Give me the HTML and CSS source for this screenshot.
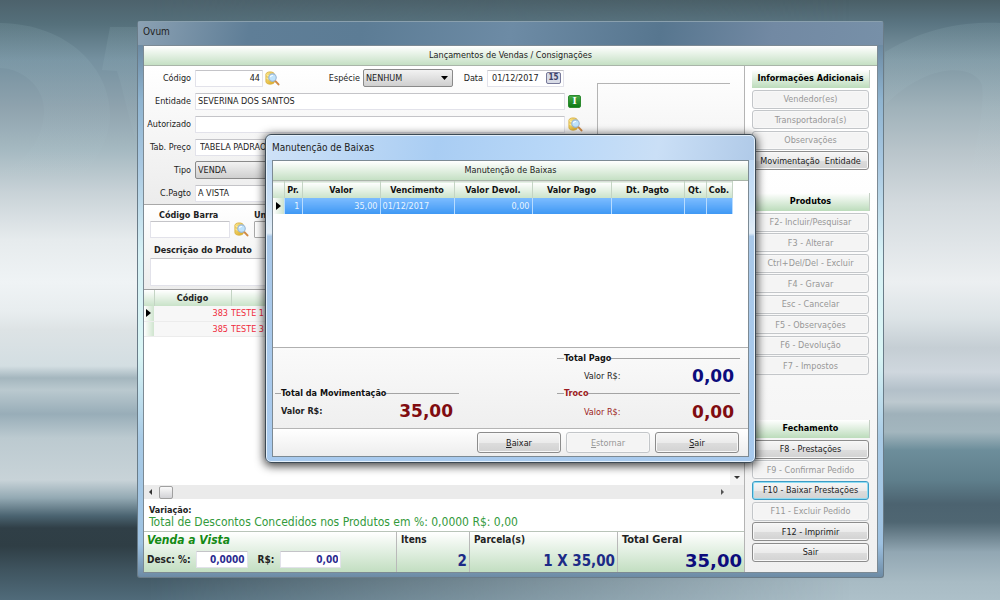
FILE: index.html
```html
<!DOCTYPE html>
<html lang="pt-BR">
<head>
<meta charset="utf-8">
<title>Ovum</title>
<link rel="stylesheet" href="styles.css">
</head>
<body>
<svg width="0" height="0" class="defs" aria-hidden="true">
  <defs>
    <linearGradient id="gold" x1="0" y1="0" x2="1" y2="1"><stop offset="0" stop-color="#fbe88a"/><stop offset="1" stop-color="#d9a51e"/></linearGradient>
    <symbol id="lookup" viewBox="0 0 16 16">
      <path d="M1 3.5C1 2 3 1 5.5 1S10 2 10 3.500V11.500C10 13 8 14 5.500 14S1 13 1 11.500Z" fill="url(#gold)" stroke="#d9b040"/>
      <path d="M1.500 7.500c1 1 3 1.200 4 1M1.500 4c1 1 3 1.200 5 .8" fill="none" stroke="#fff3b5"/>
      <path d="M10.800 10.500l3.600 3.800" stroke="#d08a45" stroke-width="2.200" stroke-linecap="round"/>
      <circle cx="8" cy="7" r="4" fill="#bfe3fb" stroke="#9db8d4" stroke-width="1.200"/>
      <path d="M5.800 6.500a2.400 2.400 0 0 1 2.600-1.700" fill="none" stroke="#fff" stroke-width="1.200"/>
    </symbol>
  </defs>
</svg>
<div class="desktop">
  <svg class="wallpaper" viewBox="0 0 1000 600" preserveAspectRatio="none" aria-hidden="true">
    <defs>
      <linearGradient id="fade" x1="0" y1="23" x2="0" y2="190" gradientUnits="userSpaceOnUse"><stop offset="0" stop-color="#bfe0e6" stop-opacity=".1"/><stop offset="1" stop-color="#bfe0e6" stop-opacity="0"/></linearGradient>
    </defs>
    <path d="M0 23C70 24 110 70 110 115C110 150 80 185 50 200H0V172C30 160 44 135 44 110C44 85 20 68 0 68Z" fill="url(#fade)"/>
    <path d="M110 27H140V150C128 120 125 95 117 71L102 70Z" fill="url(#fade)"/>
    <path d="M885 52C930 26 965 22 1000 23V200H965C975 150 985 110 982 85C975 65 930 60 885 105Z" fill="url(#fade)"/>
  </svg>
  <main class="window">
    <div class="titlebar">Ovum</div>
    <div class="client">
      <h1 class="band">Lançamentos de Vendas / Consignações</h1>
      <div class="columns">
        <div class="work">
          <form class="form">
            <div class="row">
              <label class="lbl" for="cod">Código</label>
              <input id="cod" class="field num w-code" value="44">
              <button type="button" class="icon" aria-label="Pesquisar código"><svg><use href="#lookup"/></svg></button>
              <label class="lbl wide" for="esp">Espécie</label>
              <select id="esp" class="combo w-esp"><option>NENHUM</option></select>
              <label class="lbl date" for="dat">Data</label>
              <span class="field datebox"><input id="dat" value="01/12/2017"><button type="button" class="cal" aria-label="Calendário">15</button></span>
            </div>
            <div class="row">
              <label class="lbl" for="ent">Entidade</label>
              <input id="ent" class="field w-long" value="SEVERINA DOS SANTOS">
              <button type="button" class="info" aria-label="Informações">I</button>
            </div>
            <div class="row">
              <label class="lbl" for="aut">Autorizado</label>
              <input id="aut" class="field w-long">
              <button type="button" class="icon" aria-label="Pesquisar autorizado"><svg><use href="#lookup"/></svg></button>
            </div>
            <div class="row">
              <label class="lbl" for="tab">Tab. Preço</label>
              <input id="tab" class="field w-long pad" value="TABELA PADRAO">
            </div>
            <div class="row">
              <label class="lbl" for="tip">Tipo</label>
              <select id="tip" class="combo w-long"><option>VENDA</option></select>
            </div>
            <div class="row">
              <label class="lbl" for="pag">C.Pagto</label>
              <input id="pag" class="field w-long" value="A VISTA">
            </div>
            <div class="photo"></div>
          </form>
          <section class="product">
            <div class="cell">
              <label for="bar">Código Barra</label>
              <div class="inline"><input id="bar" class="field w-bar"><button type="button" class="icon" aria-label="Pesquisar barra"><svg><use href="#lookup"/></svg></button></div>
            </div>
            <div class="cell unit">
              <label for="uni">Unidade</label>
              <input id="uni" class="field framed">
            </div>
            <div class="cell full">
              <label for="desc">Descrição do Produto</label>
              <input id="desc" class="field tall">
            </div>
          </section>
          <div class="items">
            <table class="grid">
              <colgroup><col class="c-mark"><col class="c-code"><col></colgroup>
              <thead><tr><th></th><th>Código</th><th></th></tr></thead>
              <tbody>
                <tr><td class="mark"><i class="arrow"></i></td><td class="r">383</td><td>TESTE 1</td></tr>
                <tr><td class="mark"></td><td class="r">385</td><td>TESTE 3</td></tr>
              </tbody>
            </table>
            <div class="vbar"><i class="down"></i></div>
          </div>
          <div class="hbar"><i class="left"></i><i class="thumb"></i><i class="right"></i></div>
          <div class="variation">
            <b>Variação:</b>
            <span>Total de Descontos Concedidos nos Produtos em %: 0,0000 R$: 0,00</span>
          </div>
          <footer class="totals">
            <div class="total sale">
              <em>Venda a Vista</em>
              <div class="inline">
                <label for="dp">Desc: %:</label><input id="dp" class="field blue w-dp" value="0,0000">
                <label for="dr" class="rs">R$:</label><input id="dr" class="field blue w-dr" value="0,00">
              </div>
            </div>
            <div class="total"><b>Itens</b><span>2</span></div>
            <div class="total"><b>Parcela(s)</b><span>1 X 35,00</span></div>
            <div class="total grand"><b>Total Geral</b><span class="big">35,00</span></div>
          </footer>
        </div>
        <aside class="side">
          <div class="group g1">
            <h2>Informações Adicionais</h2>
            <button disabled>Vendedor(es)</button>
            <button disabled>Transportadora(s)</button>
            <button disabled>Observações</button>
            <button>Movimentação&nbsp; Entidade</button>
          </div>
          <div class="group g2">
            <h2>Produtos</h2>
            <button disabled>F2- Incluir/Pesquisar</button>
            <button disabled>F3 - Alterar</button>
            <button disabled>Ctrl+Del/Del - Excluir</button>
            <button disabled>F4 - Gravar</button>
            <button disabled>Esc - Cancelar</button>
            <button disabled>F5 - Observações</button>
            <button disabled>F6 - Devolução</button>
            <button disabled>F7 - Impostos</button>
          </div>
          <div class="group g3">
            <h2>Fechamento</h2>
            <button>F8 - Prestações</button>
            <button disabled>F9 - Confirmar Pedido</button>
            <button class="focus">F10 - Baixar Prestações</button>
            <button disabled>F11 - Excluir Pedido</button>
            <button>F12 - Imprimir</button>
            <button>Sair</button>
          </div>
        </aside>
      </div>
    </div>
  </main>
  <section class="dialog" role="dialog" aria-labelledby="dlg">
    <div class="titlebar" id="dlg">Manutenção de Baixas</div>
    <div class="client">
      <h2 class="band">Manutenção de Baixas</h2>
      <div class="sheet">
        <table class="pay">
          <colgroup><col class="p0"><col class="p1"><col class="p2"><col class="p3"><col class="p4"><col class="p5"><col class="p6"><col class="p7"><col class="p8"></colgroup>
          <thead><tr><th></th><th>Pr.</th><th>Valor</th><th>Vencimento</th><th>Valor Devol.</th><th>Valor Pago</th><th>Dt. Pagto</th><th>Qt.</th><th>Cob.</th></tr></thead>
          <tbody><tr><td class="mark"><i class="arrow"></i></td><td class="r">1</td><td class="r">35,00</td><td>01/12/2017</td><td class="r">0,00</td><td></td><td></td><td></td><td></td></tr></tbody>
        </table>
      </div>
      <div class="sums">
        <fieldset class="f-mov"><legend>Total da Movimentação</legend><b>Valor R$:</b><strong>35,00</strong></fieldset>
        <div class="stack">
          <fieldset><legend>Total Pago</legend><span>Valor R$:</span><strong class="navy">0,00</strong></fieldset>
          <fieldset class="red"><legend>Troco</legend><span>Valor R$:</span><strong>0,00</strong></fieldset>
        </div>
      </div>
      <div class="actions">
        <button><u>B</u>aixar</button>
        <button disabled><u>E</u>stornar</button>
        <button><u>S</u>air</button>
      </div>
    </div>
  </section>
</div>
</body>
</html>
```
FILE: styles.css
```css
* { box-sizing: border-box; }
body { margin: 0; font: 9px/12px "DejaVu Sans Condensed", "DejaVu Sans", sans-serif; color: #222; }
input, select, button { font: inherit; color: inherit; margin: 0; padding: 0; border: 0; min-width: 0; }
h1, h2 { margin: 0; font: inherit; }
.defs { position: absolute; }

.desktop {
  position: relative; min-height: 100vh; padding: 21px 116px 22px 137px; overflow: hidden; isolation: isolate;
  background: linear-gradient(#4a5f67 0, #5a7582 4%, #7f98a4 10%, #a0b2ba 18%, #b8c4ca 25%, #d3dade 34%, #eceff1 47%, #dce3e6 53%, #c5ced4 58%, #cfd7de 62%, #b3c0c9 65%, #bdc9cf 67%, #9fb1ba 69%, #a3b6be 72%, #6d8e9b 75%, #5f7f8c 80%, #4c6370 84%, #4f6672 87%, #92a7b3 92%, #a8bbc4 97%, #adc0c9 100%);
  display: flex;
}
.desktop::before {
  content: ""; position: absolute; inset: 0; z-index: -2;
  background: linear-gradient(#4d626c 0, #55707b 4%, #7591a0 10%, #8fa3ae 18%, #a5b9c1 25%, #c8d2d7 32%, #e6ebed 40%, #eff3f5 47%, #e8edef 52%, #dde3e5 55%, #d3dee2 61%, #a4b6be 63%, #bac9cf 65%, #98adb8 69%, #bccad0 73%, #c8d3d8 80%, #93a9b3 83%, #4a6370 86%, #303f47 88%, #2f3e45 91%, #3f545f 95%, #506b7a 100%);
  -webkit-mask-image: linear-gradient(90deg, #000 15%, transparent 85%);
  mask-image: linear-gradient(90deg, #000 15%, transparent 85%);
}
.wallpaper { position: absolute; inset: 0; width: 100%; height: 100%; z-index: -1; }

.window, .dialog { display: flex; flex-direction: column; }
.window {
  flex: 1; padding: 0 5px 4px; border: 1px solid #6a7c88; border-top-color: #8aa0ae; border-radius: 3px;
  background: linear-gradient(#5f7d94 0, #6c8aa2 4%, #8fb4d0 14%, #aac9e2 26%, #d8f2f6 42%, #d9f5f5 60%, #a9cbe6 75%, #9ec2e2 94%, #6d8ba5 100%);
}
.window > .titlebar { height: 23px; line-height: 20px; font-size: 10px; background: linear-gradient(100deg, #8ba1b3 0, #5f7e97 15%, #5c7c95 30%, #6d8ba5 50%, #57768f 70%, #7289a3 85%, #7790a8 100%); margin: 0 -5px; padding-left: 5px; }
.client { flex: 1; display: flex; flex-direction: column; background: #fff; border: 1px solid #7c8a94; }
.band { height: 20px; line-height: 19px; text-align: center; background: linear-gradient(#fff, #c5e0c4); border-bottom: 1px solid #a9b5a9; }
.columns { flex: 1; display: flex; }
.work { flex: 1; min-width: 0; display: flex; flex-direction: column; }

.form { position: relative; display: grid; gap: 5px; padding: 3px 0 2px; background: linear-gradient(#fff, #ececec); }
.row { display: flex; align-items: center; height: 18px; }
.lbl { width: 47px; margin-right: 4px; text-align: right; flex: none; white-space: nowrap; }
.lbl.wide { width: 80px; margin-right: 3px; }
.lbl.date { width: 30px; }
.field { height: 17px; padding: 0 2px; background: #fff; border: 1px solid #e2e2ea; border-top-color: #c4c4c8; border-radius: 1px; }
.num { text-align: right; }
.pad { padding-left: 4px; }
.w-code { width: 68px; }
.w-long { width: 370px; }
.w-esp { width: 90px; }
.icon { width: 15px; height: 15px; margin-left: 4px; background: none; flex: none; }
.icon svg { width: 15px; height: 15px; display: block; }
.row .icon { margin-left: 2px; }
.row .w-long + .icon, .row .w-long + .info { margin-left: 3px; }
.combo { height: 18px; padding: 0 2px; appearance: none; border: 1px solid #8a8a8a; border-radius: 2px; background: linear-gradient(#f2f2f2, #cfcfcf); }
.w-esp { background: url("data:image/svg+xml,%3Csvg xmlns='http://www.w3.org/2000/svg' width='7' height='4'%3E%3Cpath d='M0 0h7L3.5 4z'/%3E%3C/svg%3E") right 4px center no-repeat, linear-gradient(#f2f2f2, #cfcfcf); }
.datebox { display: flex; align-items: center; width: 77px; padding: 0 2px 0 4px; }
.datebox input { width: 54px; background: none; }
.cal { width: 15px; height: 12px; line-height: 10px; font-size: 8px; font-weight: bold; color: #3b4268; background: #d8dbe6; border: 1px solid #77799a; border-radius: 2px; }
.info { width: 13px; height: 13px; color: #fff; font: bold 9px/11px "DejaVu Serif", serif; background: linear-gradient(#46a946, #0c7a14); border: 1px solid #2c8a2f; border-radius: 2px; }
.photo { position: absolute; left: 453px; top: 17px; width: 133px; height: 100px; border: 1px solid #b4b4b4; border-right: 0; border-bottom: 0; }

.product { display: grid; grid-template-columns: 99px 1fr; gap: 2px 5px; padding: 4px 6px 3px; border-top: 1px solid #a8a8a8; background: linear-gradient(#fff, #ededed); }
.product label { display: block; font-weight: bold; padding-left: 9px; }
.product .unit label { padding-left: 0; }
.product .full label { padding: 4px 0 2px 4px; }
.inline { display: flex; align-items: center; }
.w-bar { width: 81px; }
.framed { width: 60px; border-color: #aaa; display: block; }
.full { grid-column: 1 / -1; }
.tall { display: block; width: 580px; height: 28px; }

.items { flex: 1; display: flex; border-top: 1px solid #a0a0a0; }
.grid { flex: 1; align-self: flex-start; }
table { border-collapse: collapse; table-layout: fixed; }
th { padding: 0; background: linear-gradient(#fff, #c9e2c8); border-right: 1px solid #c4d4c4; white-space: nowrap; }
td { padding: 0 2px; overflow: hidden; white-space: nowrap; }
.r { text-align: right; }
.grid th { height: 16px; }
.grid td { height: 15px; padding: 0 1px 0 0; color: #f02a3c; background: #f7f7f7; border-bottom: 1px solid #ececec; }
.grid td.r { padding-right: 3px; }
.c-mark { width: 10px; }
.c-code { width: 77px; }
.grid td.mark { padding: 0; background: linear-gradient(90deg, #fff, #cfe4ce); }
.arrow { display: block; width: 0; border: 4px solid transparent; border-left: 5px solid #000; border-right: 0; margin-left: 2px; }
.vbar { width: 14px; background: #f3f3f3; display: flex; align-items: flex-end; justify-content: center; padding-bottom: 6px; }
.down { border: 3px solid transparent; border-top-color: #333; border-bottom: 0; }
.hbar { height: 14px; display: flex; align-items: center; background: #ebebeb; padding: 0 20px 0 5px; }
.left { border: 3px solid transparent; border-right-color: #333; border-left: 0; }
.right { border: 3px solid transparent; border-left-color: #555; border-right: 0; margin-left: auto; }
.thumb { width: 14px; height: 13px; margin-left: 7px; border: 1px solid #a0a0a0; border-radius: 2px; background: linear-gradient(#fafafa, #d2d2d6); }
.variation { padding: 5px 5px 3px; display: grid; }
.variation b { font-size: 9px; }
.variation span { font-size: 12px; color: #339a3c; white-space: nowrap; }

.totals { display: grid; grid-template-columns: 253px 73px 148px 1fr; border-top: 1px solid #b9c4b9; }
.total { height: 40px; padding: 2px 4px 0; display: flex; flex-direction: column; justify-content: space-between; background: linear-gradient(#fff, #c2dec1); border-right: 1px solid #b9b9b9; font-weight: bold; font-size: 10px; }
.total:not(.grand):not(.sale) { padding-right: 2px; }
.grand { border-right: 0; padding-right: 2px; font-size: 11px; }
.total > span { align-self: flex-end; font-size: 15px; line-height: 22px; color: #1c2a86; }
.total .big { font: bold 18px/22px "DejaVu Sans", sans-serif; color: #0c0c7c; }
.total em { color: #148a14; font-size: 12px; }
.sale { padding-left: 3px; }
.sale .inline { padding-bottom: 4px; }
.blue { text-align: right; color: #2b2b90; font-weight: bold; }
.w-dp { width: 52px; margin-left: 5px; }
.rs { margin-left: 10px; }
.w-dr { width: 61px; margin-left: 6px; }

.side { width: 133px; padding: 4px 8px 10px 7px; display: flex; flex-direction: column; justify-content: space-between; border-left: 1px solid #b4b4b4; background: linear-gradient(#fff 20%, #f0f0f0); }
.group { display: flex; flex-direction: column; justify-content: space-between; }
.g1 { min-height: 100px; }
.g2 { min-height: 182px; margin-bottom: 22px; }
.g3 { min-height: 142px; }
.side h2 { height: 18px; line-height: 16px; margin-right: -1px; font-weight: bold; color: #000; text-align: center; white-space: nowrap; background: linear-gradient(#fff, #bcdcbb); border-right: 1px solid #c4cfc4; }
.side button, .actions button { height: 19px; text-align: center; white-space: nowrap; color: #222; border: 1px solid #8c8c8c; border-radius: 3px; background: linear-gradient(#f6f6f6 0, #ebebeb 50%, #dddddd 51%, #d2d2d2); box-shadow: inset 0 0 0 1px #f8f8f8; }
.side button:disabled, .actions button:disabled { color: #979797; border-color: #c3c6c9; background: #f4f4f4; }
.side .focus { border-color: #3c9cc6; box-shadow: inset 0 0 0 1px #8fdcf2; }

.dialog {
  position: absolute; left: 265px; top: 134px; width: 491px; height: 329px; padding: 0 6px 5px; border: 1px solid #3c4a55; border-radius: 6px;
  background: linear-gradient(#b9d5f2 0, #c9dff5 20%, #e2edf6 30%, #a9c8e8 31%, #a8caee 100%);
  box-shadow: inset 0 0 0 1px #e4f0fb, 0 2px 10px 1px rgba(0, 0, 0, .75);
}
.dialog > .titlebar { height: 24px; line-height: 24px; font-size: 10px; background: linear-gradient(100deg, #cfe2f7, #a9cdf3 35%, #b9d8f8 60%, #cadff6 80%, #b0cae8); margin: 1px -5px 0; padding-left: 5px; border-radius: 5px 5px 0 0; }
.sheet { flex: 1; }
.pay { width: 459px; }
.pay th { height: 16px; color: #111; }
.pay td { height: 16px; color: #e8f4ff; background: linear-gradient(#7cbcff, #3f98f4); border-right: 1px solid #b8dcff; }
.pay td.mark { padding: 0; background: linear-gradient(90deg, #fff, #cfe4ce); }
.pay .mark .arrow { margin-left: 3px; }
.pay thead tr { border-top: 1px solid #d8ddd8; }
.p0 { width: 11px; } .p1 { width: 18px; } .p2 { width: 78px; } .p3 { width: 74px; } .p4 { width: 78px; }
.p5 { width: 79px; } .p6 { width: 73px; } .p7 { width: 22px; } .p8 { width: 26px; }
.sums { display: flex; justify-content: space-between; align-items: flex-start; height: 81px; padding: 4px 8px 0 2px; border-top: 1px solid #b0b0b0; background: linear-gradient(#fafafa, #efefef); }
fieldset { margin: 0; padding: 0 6px; border: 0; border-top: 1px solid #a4a4a4; height: 35px; display: flex; align-items: center; justify-content: space-between; min-width: 0; }
fieldset legend { padding: 0; font-weight: bold; color: #111; }
.f-mov { width: 184px; margin-top: 35px; }
.f-mov b { color: #222; }
.stack { width: 183px; }
.stack fieldset { padding-left: 7px; }
.stack .red { height: 38px; }
.stack span { margin-left: 20px; }
fieldset strong { font: bold 17px/20px "DejaVu Sans", sans-serif; color: #800c10; }
fieldset .navy { color: #0c0c7c; }
.red legend, .red span { color: #9c1c22; }
.actions { display: flex; justify-content: flex-end; align-items: center; gap: 5px; height: 28px; padding-right: 9px; border-top: 1px solid #b4b4b4; background: linear-gradient(#fff, #ededed); }
.actions button { width: 84px; height: 21px; }
```
